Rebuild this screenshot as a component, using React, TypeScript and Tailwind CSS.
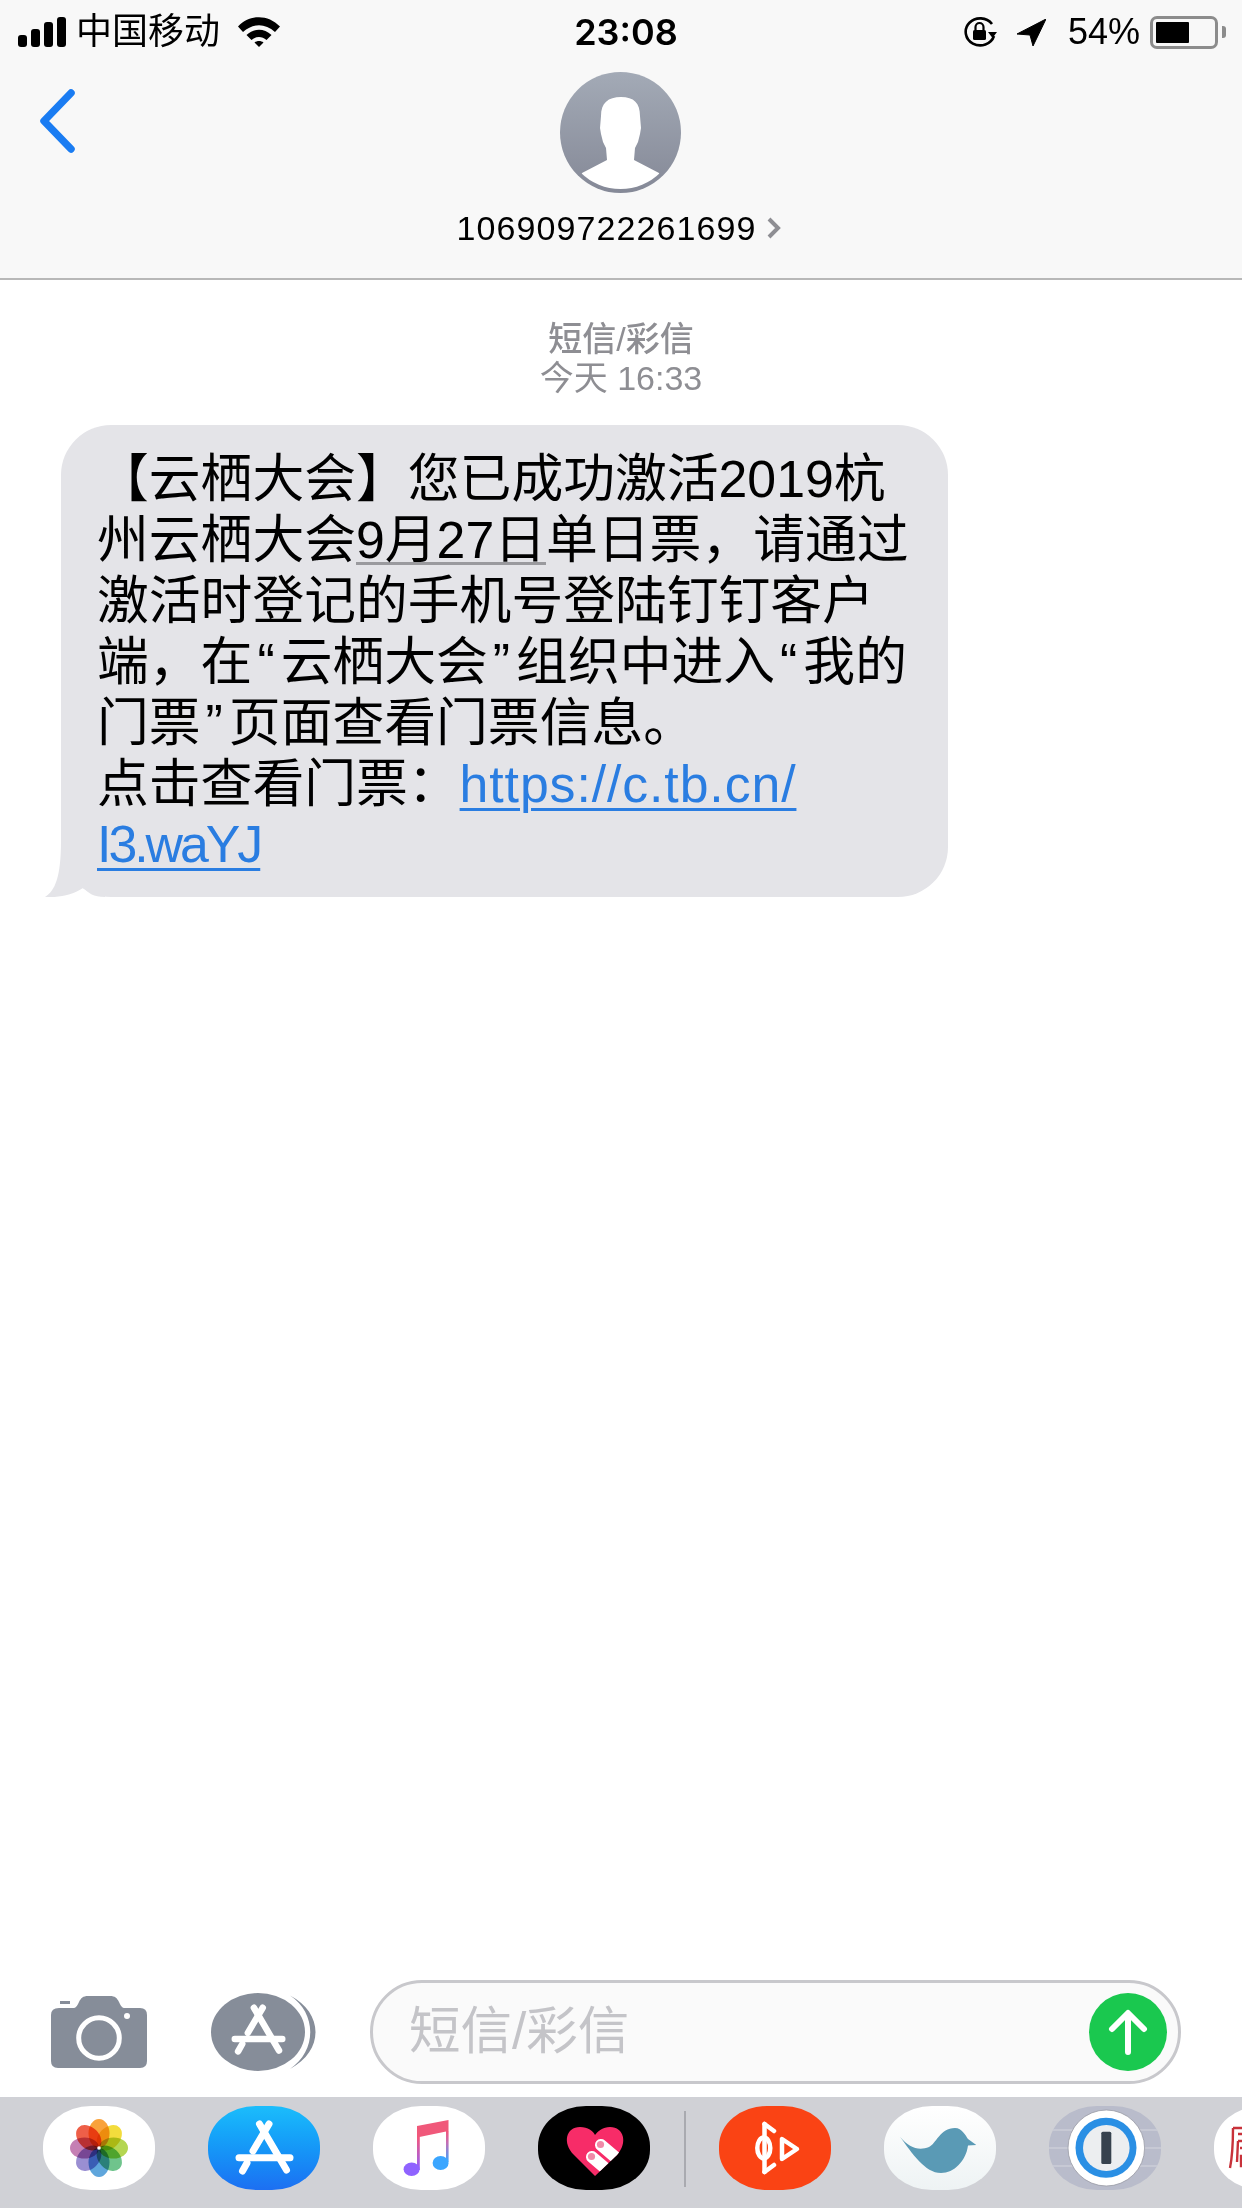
import React from 'react';

const appA = (color: string) => (
  <g stroke={color} strokeWidth="7" strokeLinecap="round" fill="none">
    <path d="M61 18 L45 45" />
    <path d="M39 57 L34.5 65" />
    <path d="M51.5 18 L78.5 64" />
    <path d="M31 51.7 L82 51.7" />
  </g>
);

const SignalBars = () => (
  <div className="flex items-end gap-[4px] h-[30px]">
    <div className="w-[9px] h-[12px] rounded-[3px] bg-black" />
    <div className="w-[9px] h-[18px] rounded-[3px] bg-black" />
    <div className="w-[9px] h-[25px] rounded-[3px] bg-black" />
    <div className="w-[9px] h-[30px] rounded-[3px] bg-black" />
  </div>
);

const Wifi = () => (
  <svg width="42" height="30" viewBox="0 0 42 30">
    <path d="M0 9.5 C12 -3 30 -3 42 9.5 L37 15 C27 6 15 6 5 15Z" fill="#000" />
    <path d="M8.5 18 C16 11 26 11 33.5 18 L28.5 23 C24 19 18 19 13.5 23Z" fill="#000" />
    <path d="M16.5 25.5 C19 23.5 23 23.5 25.5 25.5 L21 30Z" fill="#000" />
  </svg>
);

const OrientationLock = () => (
  <svg width="34" height="30" viewBox="0 0 34 30">
    <path d="M31 19 A14.5 13.5 0 1 1 29 7" fill="none" stroke="#000" strokeWidth="2.6" />
    <path d="M25 15 L34 15 L29.5 21Z" fill="#000" />
    <rect x="10" y="13" width="13" height="10" rx="1.5" fill="#000" />
    <path d="M12.5 13 V10 a4 4 0 0 1 8 0 V13" fill="none" stroke="#000" strokeWidth="2.2" />
  </svg>
);

const LocationArrow = () => (
  <svg width="29" height="27" viewBox="0 0 29 27">
    <path d="M29 0 L0 15 L13 16 L16 27Z" fill="#000" strokeLinejoin="round" stroke="#000" strokeWidth="1" />
  </svg>
);

const Battery = () => (
  <div className="flex items-center">
    <div className="w-[68px] h-[33px] rounded-[7px] border-[3px] border-[#8c8c8c] p-[3px]">
      <div className="w-[33px] h-full bg-black rounded-[1px]" />
    </div>
    <div className="w-[4px] h-[12px] ml-[4px] rounded-r-[3px] bg-[#8c8c8c]" />
  </div>
);

const StatusBar = () => (
  <div className="grid grid-cols-[1fr_auto_1fr] items-center h-[62px] pt-[2px] pl-[18px] pr-[16px]">
    <div className="flex items-center">
      <SignalBars />
      <span className="ml-[10px] text-[36px] leading-none text-black">中国移动</span>
      <div className="ml-[18px]">
        <Wifi />
      </div>
    </div>
    <span className="font-['Inter',sans-serif] text-[36px] leading-none font-semibold text-black ml-[8px]">23:08</span>
    <div className="flex items-center justify-end">
      <OrientationLock />
      <div className="ml-[20px]">
        <LocationArrow />
      </div>
      <span className="ml-[22px] text-[36px] leading-none text-black">54%</span>
      <div className="ml-[10px]">
        <Battery />
      </div>
    </div>
  </div>
);

const Avatar = () => (
  <svg width="121" height="121" viewBox="0 0 121 121">
    <defs>
      <linearGradient id="avatarBg" x1="0" y1="0" x2="0" y2="1">
        <stop offset="0" stopColor="#a3aab6" />
        <stop offset="1" stopColor="#858997" />
      </linearGradient>
      <clipPath id="avatarClip">
        <circle cx="60.5" cy="60.5" r="56.5" />
      </clipPath>
    </defs>
    <circle cx="60.5" cy="60.5" r="60.5" fill="url(#avatarBg)" />
    <g clipPath="url(#avatarClip)">
      <path
        d="M61 25 C48 25 41 31 41 44 L40 56 L41 62 L43 70 L46 76 L47 88 L22 101 L10 125 L111 125 L99 101 L74 88 L75 76 L78 70 L80 62 L81 56 L80 44 C80 31 74 25 61 25Z"
        fill="#fff"
      />
    </g>
  </svg>
);

const ContactHeader = () => (
  <div className="grid grid-cols-[1fr_auto_1fr] h-[216px] pb-[14px]">
    <div className="pl-[38px] pt-[27px]">
      <svg width="38" height="64" viewBox="0 0 38 64">
        <path d="M33 4 L6 32 L33 60" fill="none" stroke="#1a7cf2" strokeWidth="7.5" strokeLinecap="round" strokeLinejoin="round" />
      </svg>
    </div>
    <div className="flex flex-col items-center pt-[10px]">
      <Avatar />
      <div className="flex items-center mt-[17px] mr-[5px]">
        <span className="text-[34px] leading-[36px] tracking-[1.1px] text-black">106909722261699</span>
        <svg className="ml-[10px]" width="14" height="22" viewBox="0 0 14 22">
          <path d="M2 2 L11 11 L2 20" fill="none" stroke="#8e8e93" strokeWidth="4" />
        </svg>
      </div>
    </div>
    <div />
  </div>
);

const Quote: React.FC<{ children: React.ReactNode }> = ({ children }) => (
  <span className="pl-[5px] pr-[6px]">{children}</span>
);

const linkClass = 'text-[#2a7de1] underline decoration-[3px] underline-offset-[6px]';

const MessageBubble = () => (
  <div className="relative w-[887px] ml-[61px] mt-[27px] h-[472px] rounded-[50px] bg-[#e4e4e8] pl-[36px] pt-[24px] text-[51.8px] leading-[61px] text-black whitespace-nowrap">
    <svg className="absolute left-[-16px] bottom-0" width="60" height="56" viewBox="0 0 60 56">
      <path d="M16 0 H60 V56 C48 56 44 52 38 47 C28 54 12 57 0 56 C10 50 16 36 16 0Z" fill="#e4e4e8" />
    </svg>
    <div className="relative">【云栖大会】您已成功激活2019杭</div>
    <div className="relative">
      州云栖大会
      <span className="border-b-[3px] border-[#9a9a9e] inline-block h-[55px] align-top">9月27日</span>
      单日票，请通过
    </div>
    <div className="relative">激活时登记的手机号登陆钉钉客户</div>
    <div className="relative">
      端，在<Quote>“</Quote>云栖大会<Quote>”</Quote>组织中进入<Quote>“</Quote>我的
    </div>
    <div className="relative">
      门票<Quote>”</Quote>页面查看门票信息。
    </div>
    <div className="relative">
      点击查看门票：<span className={`${linkClass} tracking-[0.9px]`}>https://c.tb.cn/</span>
    </div>
    <div className="relative leading-[59px]">
      <span className={`${linkClass} tracking-[-3px]`}>I3.waYJ</span>
    </div>
  </div>
);

const Thread = () => (
  <div className="flex-1 bg-white">
    <div className="flex flex-col items-center pt-[40px] text-[34px] leading-[39px] text-[#8e8e93]">
      <span className="font-medium">短信/彩信</span>
      <span>今天 16:33</span>
    </div>
    <MessageBubble />
  </div>
);

const CameraIcon = () => (
  <svg width="96" height="72" viewBox="0 0 96 72">
    <path
      d="M8 12 H22 C25 12 26 10 28 6 C30 2 32 0 37 0 H59 C64 0 66 2 68 6 C70 10 71 12 74 12 H89 Q96 12 96 19 V65 Q96 72 89 72 H7 Q0 72 0 65 V19 Q0 12 8 12Z"
      fill="#868d99"
    />
    <rect x="9" y="5" width="10" height="3" fill="#868d99" />
    <circle cx="48" cy="42" r="20.3" fill="none" stroke="#fff" strokeWidth="5" />
    <circle cx="76" cy="20" r="3" fill="#fff" />
  </svg>
);

const AppsIcon = () => (
  <svg width="105" height="78" viewBox="0 0 105 78">
    <ellipse cx="47" cy="39" rx="47" ry="39" fill="#868d99" />
    <path d="M79 2.5 C113 20 113 58 79 76 C106 58 106 20 79 2.5Z" fill="#868d99" />
    <g transform="translate(-5 -2) scale(.93)">{appA('#fff')}</g>
  </svg>
);

const Composer = () => (
  <div className="flex items-center h-[130px] pl-[51px] bg-white">
    <CameraIcon />
    <div className="ml-[64px]">
      <AppsIcon />
    </div>
    <div className="ml-[54px] w-[811px] h-[104px] rounded-[52px] border-[3px] border-[#c8c8cc] bg-[#fafafa] flex items-center justify-between pl-[36px] pr-[11px]">
      <span className="text-[51.5px] leading-none text-[#c4c4c8]">短信/彩信</span>
      <svg width="78" height="78" viewBox="0 0 78 78">
        <circle cx="39" cy="39" r="39" fill="#1ac84f" />
        <path d="M39 59 V21 M23 36 L39 20 L55 36" fill="none" stroke="#fff" strokeWidth="6" strokeLinecap="round" strokeLinejoin="round" />
      </svg>
    </div>
  </div>
);

const Tile: React.FC<{ className?: string; children?: React.ReactNode }> = ({ className = '', children }) => (
  <div className={`shrink-0 w-[112px] h-[84px] rounded-[48px/40px] overflow-hidden ${className}`}>
    <svg width="112" height="84" viewBox="0 0 112 84">
      {children}
    </svg>
  </div>
);

const petals = [
  { angle: 0, color: '#f9a23b' },
  { angle: 45, color: '#f3dc3c' },
  { angle: 90, color: '#b4d652' },
  { angle: 135, color: '#6fc48c' },
  { angle: 180, color: '#5fa6dc' },
  { angle: 225, color: '#9a8fd2' },
  { angle: 270, color: '#c57fb4' },
  { angle: 315, color: '#ee5f48' },
];

const PhotosTile = () => (
  <Tile className="bg-white">
    {petals.map((p) => (
      <ellipse
        key={p.angle}
        cx="56"
        cy="27.5"
        rx="10.5"
        ry="14.5"
        fill={p.color}
        transform={`rotate(${p.angle} 56 42)`}
        style={{ mixBlendMode: 'multiply' }}
      />
    ))}
    <circle cx="56" cy="42" r="1.8" fill="#fff" />
  </Tile>
);

const AppStoreTile = () => (
  <Tile className="bg-gradient-to-b from-[#1cbdfb] to-[#1d6ff2]">{appA('#fff')}</Tile>
);

const MusicTile = () => (
  <Tile className="bg-white">
    <defs>
      <linearGradient id="noteLeft" x1="0" y1="0" x2="0" y2="1">
        <stop offset="0" stopColor="#f4567a" />
        <stop offset="1" stopColor="#8f63ff" />
      </linearGradient>
      <linearGradient id="noteRight" x1="0" y1="0" x2="0" y2="1">
        <stop offset="0" stopColor="#f4567a" />
        <stop offset="0.4" stopColor="#c070b8" />
        <stop offset="1" stopColor="#3ba6ff" />
      </linearGradient>
    </defs>
    <path d="M44 20 L75.5 14 V25 L44 31.5Z" fill="#f0587a" />
    <path d="M44 31 H46.8 V64 H44Z" fill="url(#noteLeft)" />
    <ellipse cx="38.6" cy="63.3" rx="8" ry="6.7" fill="#8f63ff" />
    <path d="M73 25 H75.6 V56 H73Z" fill="url(#noteRight)" />
    <ellipse cx="67.6" cy="57" rx="8" ry="7" fill="#3ba6ff" />
  </Tile>
);

const HeartTile = () => (
  <Tile className="bg-black">
    <defs>
      <clipPath id="heartClip">
        <path d="M57 70 L36 49 C24 37 28 21 42 21 C50 21 55 25 57 29 C60 25 65 21 72 21 C86 21 90 37 79 49Z" />
      </clipPath>
    </defs>
    <path d="M57 70 L36 49 C24 37 28 21 42 21 C50 21 55 25 57 29 C60 25 65 21 72 21 C86 21 90 37 79 49Z" fill="#f72c68" />
    <g clipPath="url(#heartClip)">
      <path d="M54 51 L74 68" stroke="#fff" strokeWidth="12" strokeLinecap="round" />
      <path d="M63 39 L84 57" stroke="#fff" strokeWidth="12" strokeLinecap="round" />
    </g>
    <circle cx="53.5" cy="50.5" r="3.6" fill="#f08aa8" />
    <circle cx="62.5" cy="38.5" r="3.6" fill="#f08aa8" />
  </Tile>
);

const NeteaseTile = () => (
  <Tile className="bg-[#fa4314]">
    <g fill="none" stroke="#fff" strokeWidth="4.5" strokeLinecap="round" strokeLinejoin="round">
      <path d="M45.5 18 V66" />
      <ellipse cx="44.8" cy="42" rx="6.5" ry="10.5" />
      <path d="M45.5 18 L55 25 M45.5 66 L55 59" />
      <path d="M63 33 V53 L78 43Z" />
    </g>
  </Tile>
);

const BirdTile = () => (
  <Tile className="bg-gradient-to-b from-white to-[#eef3f4]">
    <path
      d="M16 30.7 C25 42 35 45 45 41 C52 38 56 22 71 22 C78 22 82 30 84 33 L92.3 39 L84 39.5 C82 55 70 67 57 67 C41 67 28 47 16 30.7Z"
      fill="#5a9ab5"
    />
  </Tile>
);

const OnePasswordTile = () => (
  <Tile className="bg-[#b9bccb]">
    <path d="M0 24 H112 M0 42 H112 M0 60 H112" stroke="#d5d6de" strokeWidth="1" />
    <ellipse cx="57.3" cy="42" rx="38.3" ry="38" fill="#fff" stroke="#9a9ca6" strokeWidth="0.8" />
    <ellipse cx="57" cy="41.7" rx="30.5" ry="30" fill="#2a8fe4" />
    <ellipse cx="57.3" cy="41.9" rx="23.3" ry="23" fill="#eceef0" />
    <rect x="52.3" y="25.7" width="10" height="32.3" rx="1.5" fill="#37424e" />
  </Tile>
);

const SealTile = () => (
  <Tile className="bg-white">
    <g fill="none" stroke="#c8323a" strokeWidth="2.4">
      <path d="M19 22 H32 M19 22 C19 40 18 52 16 62 M24 28 H32 M24 35 H32 M26 42 H32 M24 35 L23 56 M27 50 H32 V60 H27Z" />
    </g>
  </Tile>
);

const AppDock = () => (
  <div className="h-[111px] bg-[#d0d1d6] overflow-hidden flex items-start pt-[9px] pl-[43px] gap-[53px]">
    <PhotosTile />
    <AppStoreTile />
    <MusicTile />
    <HeartTile />
    <div className="shrink-0 w-[2px] h-[76px] mt-[5px] bg-[#a9aab0] ml-[-19px] mr-[-20px]" />
    <NeteaseTile />
    <BirdTile />
    <OnePasswordTile />
    <SealTile />
  </div>
);

export default function App() {
  return (
    <div className="w-[1242px] h-[2208px] flex flex-col overflow-hidden bg-white font-['Liberation_Sans','Noto_Sans_CJK_SC',sans-serif]">
      <div className="bg-[#f8f8f8] border-b-[2px] border-[#b8b8b8]">
        <StatusBar />
        <ContactHeader />
      </div>
      <Thread />
      <Composer />
      <AppDock />
    </div>
  );
}
